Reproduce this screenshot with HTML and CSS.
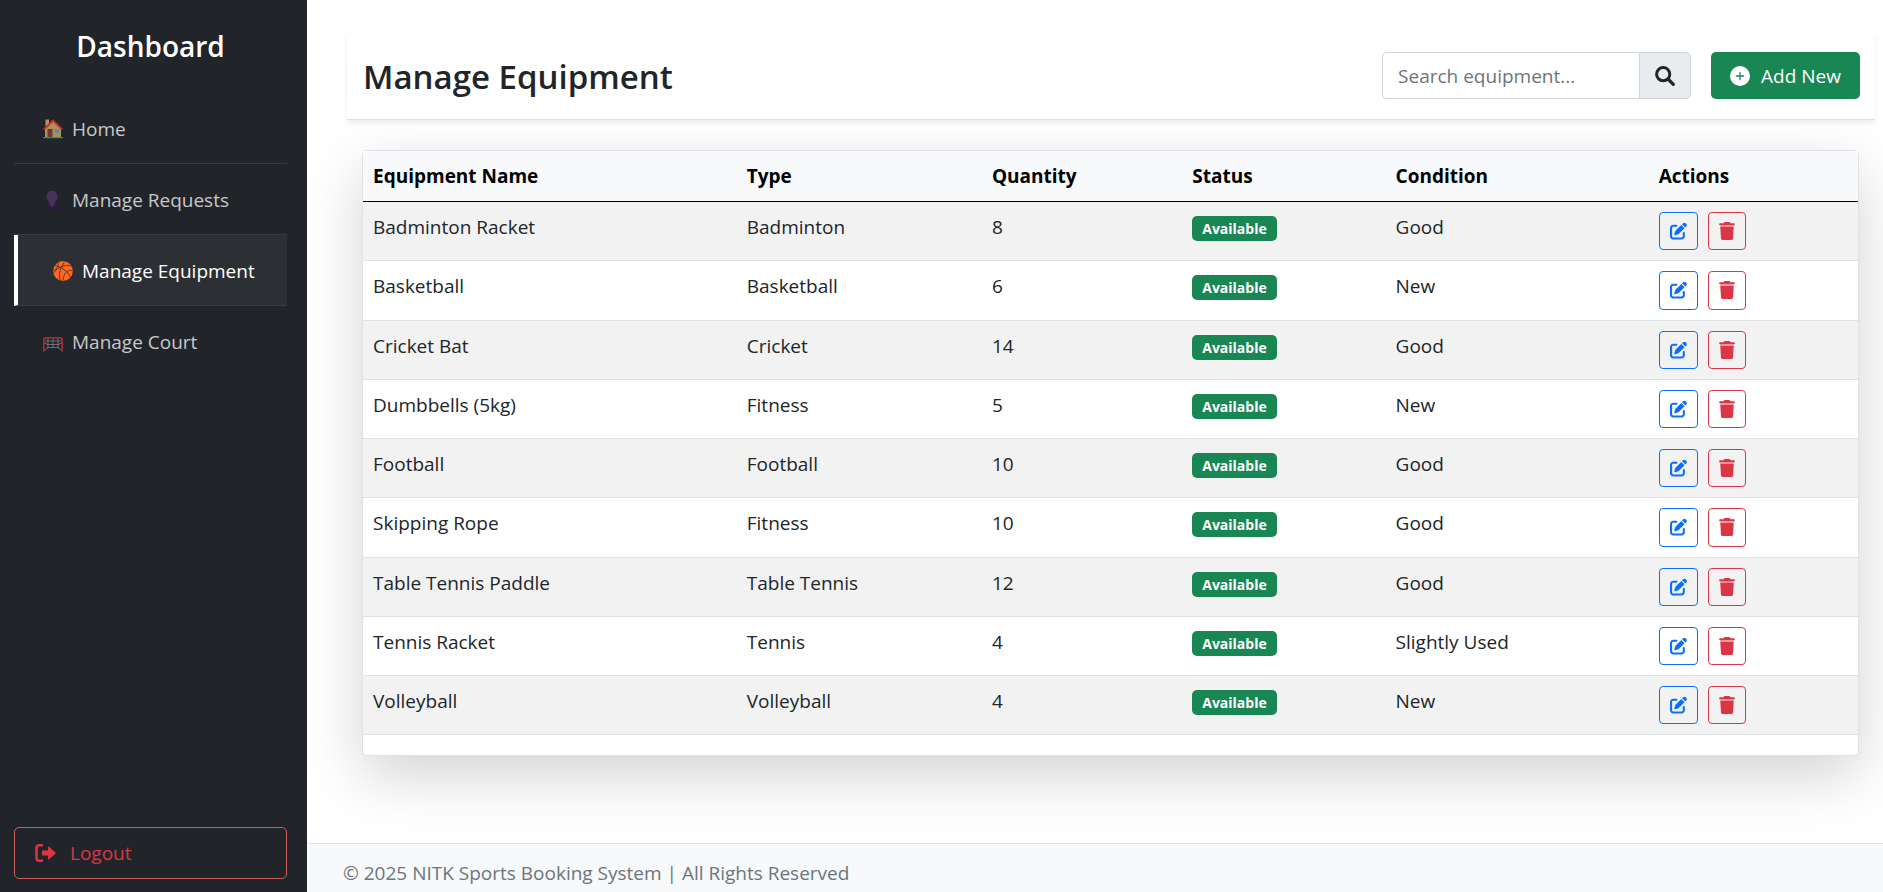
FILE: index.html
```html
<!DOCTYPE html>
<html lang="en">
<head>
<meta charset="utf-8">
<meta name="viewport" content="width=device-width, initial-scale=1">
<title>Manage Equipment</title>
<link rel="stylesheet" href="styles.css">
</head>
<body>
<svg class="sprite" aria-hidden="true">
  <symbol id="i-edit" viewBox="0 0 512 512"><path d="M471.600 21.700c-21.900-21.900-57.300-21.900-79.200 0L362.300 51.700l97.900 97.900 30.100-30.100c21.900-21.900 21.900-57.300 0-79.200L471.600 21.700zm-299.200 220c-6.100 6.100-10.800 13.600-13.500 21.900l-29.600 88.800c-2.900 8.600-.6 18.100 5.800 24.600s15.900 8.700 24.600 5.800l88.800-29.600c8.200-2.700 15.700-7.400 21.900-13.500L437.700 172.300 339.700 74.300 172.400 241.700zM96 64C43 64 0 107 0 160V416c0 53 43 96 96 96H352c53 0 96-43 96-96V320c0-17.700-14.300-32-32-32s-32 14.300-32 32v96c0 17.700-14.300 32-32 32H96c-17.700 0-32-14.300-32-32V160c0-17.700 14.300-32 32-32h96c17.700 0 32-14.300 32-32s-14.300-32-32-32H96z"/></symbol>
  <symbol id="i-trash" viewBox="0 0 448 512"><path d="M135.200 17.700L128 32H32C14.300 32 0 46.300 0 64S14.300 96 32 96H416c17.700 0 32-14.300 32-32s-14.300-32-32-32H320l-7.200-14.300C307.400 6.800 296.300 0 284.200 0H163.800c-12.100 0-23.200 6.800-28.600 17.700zM416 128H32L53.200 467c1.600 25.300 22.600 45 47.900 45H346.900c25.300 0 46.300-19.700 47.900-45L416 128z"/></symbol>
</svg>

<aside class="sidebar">
  <h2 class="brand">Dashboard</h2>
  <nav class="nav">
    <a class="nav-link" href="#">
      <svg class="emoji" viewBox="0 0 20 20" aria-hidden="true"><path fill="#d7b06c" d="M2.500 .5h3.500v7h-3.500z"/><path fill="#d7a95f" d="M10 1.500 2 9.500V18.500H18V9.500z"/><path fill="#7c4535" d="M4.500 10h5v8.500h-5z"/><path fill="#57a9de" d="M12 10h4v4h-4z"/><path d="M.8 10.500 10 1.500l9.200 9" fill="none" stroke="#e83335" stroke-width="1.800" stroke-linejoin="round"/><path fill="#1db978" d="M0 18h20v1.200H0z"/></svg>
      Home</a>
    <a class="nav-link" href="#">
      <svg class="emoji" viewBox="0 0 20 20" aria-hidden="true"><path fill="#321b41" d="M.3 19c.2-3 1.700-4.300 5.200-4.700L9 17.500l3.500-3.200c3.500.4 5 1.700 5.200 4.700z"/><path fill="#533566" d="M9 .8c3.400 0 5.200 2 5.200 5 .9.200.8 2.600-.4 2.900-.4 1.900-1.300 3-2.300 3.800v2.200L9 17.500l-2.500-2.800v-2.200C5.500 11.700 4.600 10.600 4.200 8.700 3 8.400 2.900 6 3.800 5.800c0-3 1.800-5 5.200-5z"/></svg>
      Manage Requests</a>
    <a class="nav-link active" href="#" aria-current="page">
      <svg class="emoji" viewBox="0 0 20 20" aria-hidden="true"><circle cx="10" cy="10" r="9.900" fill="#ff6723"/><path d="M2 4.500C8 6 15 10 17.500 16.500M.5 12C5 5.500 12 3.500 18.500 5M5 2c.5 3-1 6-4.500 7.500M11.500.5C9.500 5 7 8 6.500 12c-.3 3 0 5 .8 7.500M19.500 9.500C15 8.500 11 11 10 19.500" fill="none" stroke="#51331f" stroke-width=".9"/></svg>
      Manage Equipment</a>
    <a class="nav-link" href="#">
      <svg class="emoji" viewBox="0 0 20 20" aria-hidden="true"><path d="M5 6v10M10 6v10M15 6v10M2 9h16M4 12.500h12M4 15.500h12M1.500 18.500 5 15.500M18.500 18.500 15 15.500M1 11l4 1.500M19 11l-4 1.500" fill="none" stroke="#96989b" stroke-width=".8"/><path d="M.8 19.500V8q0-2.200 2.200-2.200h14q2.200 0 2.200 2.200v11.500" fill="none" stroke="#e8383d" stroke-width="1.300"/></svg>
      Manage Court</a>
  </nav>
  <button class="logout" type="button">
    <svg class="icon-logout" viewBox="0 0 21 20" aria-hidden="true"><path d="M8 2.200H4.200Q1.500 2.200 1.500 4.900v10.200q0 2.700 2.700 2.700H8" fill="none" stroke="currentColor" stroke-width="2.500"/><path fill="currentColor" d="M7.800 7.500H13V4.300q0-1.300 1-.5l6.300 5.500q.8.700 0 1.400L14 16.200q-1 .8-1-.5v-3.200H7.800q-.8 0-.8-.8V8.300q0-.8.800-.8z"/></svg>
    Logout
  </button>
</aside>

<div class="page">
  <header class="topbar">
    <h1 class="title">Manage Equipment</h1>
    <form class="tools">
      <div class="search">
        <input class="search-input" type="text" placeholder="Search equipment..." aria-label="Search equipment">
        <button class="search-button" type="button" aria-label="Search"><svg class="icon" viewBox="0 0 20 20" fill="none" stroke="currentColor" aria-hidden="true"><circle cx="8.200" cy="8.200" r="6.600" stroke-width="3"/><path d="m13 13 5.300 5.300" stroke-width="3.200" stroke-linecap="round"/></svg></button>
      </div>
      <button class="add" type="button"><svg class="icon" viewBox="0 0 20 20" aria-hidden="true"><circle cx="10" cy="10" r="10" fill="#fff"/><path d="M10 6.300v7.400M6.300 10h7.400" stroke="#198754" stroke-width="1.300" stroke-linecap="round"/></svg>Add New</button>
    </form>
  </header>

  <main class="card">
    <table class="table">
      <colgroup><col class="c-name"><col class="c-type"><col class="c-qty"><col class="c-status"><col class="c-cond"><col class="c-act"></colgroup>
      <thead>
        <tr><th scope="col">Equipment Name</th><th scope="col">Type</th><th scope="col">Quantity</th><th scope="col">Status</th><th scope="col">Condition</th><th scope="col">Actions</th></tr>
      </thead>
      <tbody id="rows"></tbody>
    </table>
  </main>

  <footer class="footer">© 2025 NITK Sports Booking System | All Rights Reserved</footer>
</div>
<script src="app.js"></script>
</body>
</html>
```
FILE: styles.css
```css
* { box-sizing: border-box; }

body {
  margin: 0;
  display: flex;
  min-height: 100vh;
  background: #fff;
  color: #212529;
  font-family: "Open Sans", "Noto Sans", sans-serif;
  font-size: 19px;
  line-height: 30px;
}

button, input { font: inherit; }
button { cursor: pointer; }
.sprite { display: none; }

.sidebar {
  z-index: 2;
  flex: 0 0 307px;
  display: flex;
  flex-direction: column;
  height: 100vh;
  padding: 28px 20px 13px 14px;
  background: #212529;
  color: #fff;
}

.brand {
  margin: 0 0 29px;
  font-size: 28px;
  line-height: 36px;
  font-weight: 600;
  text-align: center;
}

.nav { display: flex; flex-direction: column; }

.nav-link {
  display: flex;
  align-items: center;
  gap: 9px;
  padding: 21px 29px 19px;
  border-bottom: 1px solid #373b3e;
  color: rgba(255, 255, 255, .75);
  text-decoration: none;
}
.nav-link:last-child { border-bottom: 0; }
.nav-link.active {
  padding-left: 35px;
  border-left: 4px solid #fff;
  background: #2c3034;
  color: #fff;
}

.emoji { flex: none; width: 20px; height: 20px; opacity: .8; }
.active .emoji { opacity: 1; }

.logout {
  display: flex;
  align-items: center;
  gap: 14px;
  margin-top: auto;
  padding: 10px 20px;
  border: 1px solid #cd5c5c;
  border-radius: 5px;
  background: transparent;
  color: #dc3545;
}
.icon-logout { width: 21px; height: 20px; }

.page {
  flex: 1;
  min-width: 0;
  display: flex;
  flex-direction: column;
  min-height: 100vh;
}

.topbar {
  z-index: 1;
  display: flex;
  align-items: center;
  justify-content: space-between;
  margin: 32px 8px 30px 40px;
  padding: 20px 15px 20px 16px;
  border-bottom: 1px solid #dee2e6;
  background: #fff;
  box-shadow: 0 3px 5px rgba(0, 0, 0, .075);
}

.title { margin: 0; padding-top: 2px; font-size: 33px; line-height: 42px; font-weight: 600; }
.tools { display: flex; gap: 20px; }

.search { display: flex; width: 309px; }
.search-input {
  flex: 1;
  min-width: 0;
  height: 47px;
  padding: 0 15px;
  border: 1px solid #ced4da;
  border-right: 0;
  border-radius: 5px 0 0 5px;
  color: #212529;
}
.search-input::placeholder { color: #6c757d; opacity: 1; }
.search-button {
  display: flex;
  align-items: center;
  padding: 0 15px;
  border: 1px solid #ced4da;
  border-radius: 0 5px 5px 0;
  background: #e9ecef;
  color: #212529;
}
.icon { width: 20px; height: 20px; }

.add {
  display: flex;
  align-items: center;
  gap: 11px;
  padding: 0 19px;
  border: 0;
  border-radius: 5px;
  background: #198754;
  color: #fff;
}

.card {
  margin: 0 24px 0 55px;
  padding-bottom: 20px;
  border: 1px solid #dee2e6;
  border-radius: 5px;
  background: #fff;
  box-shadow: 0 20px 60px rgba(0, 0, 0, .175);
}

.table { width: 100%; table-layout: fixed; border-collapse: separate; border-spacing: 0; }
.c-name { width: 25%; }
.c-type { width: 16.4%; }
.c-qty { width: 13.4%; }
.c-status { width: 13.6%; }
.c-cond { width: 17.6%; }
.c-act { width: 14%; }

.table th, .table td { padding: 10px; text-align: left; vertical-align: top; }
.table th { background: #f8f9fa; color: #000; border-bottom: 1px solid #000; font-weight: 700; }
.table td { border-bottom: 1px solid #dee2e6; }
.table tbody tr:nth-child(odd) { background: #f2f2f2; }

.badge {
  display: inline-block;
  padding: 5px 10px;
  border-radius: 5px;
  background: #198754;
  color: #fff;
  font-size: 14px;
  line-height: 15px;
  font-weight: 700;
}

.actions { display: flex; gap: 10px; }
.action {
  display: flex;
  align-items: center;
  padding: 5px 10px;
  border: 1px solid currentColor;
  border-radius: 4px;
  background: transparent;
  font-size: 15px;
  line-height: 1.75;
}
.action::after { content: "\200b"; }
.edit { color: #0d6efd; }
.delete { color: #dc3545; }
.edit svg { width: 17px; height: 18px; fill: currentColor; }
.delete svg { width: 16px; height: 18px; fill: currentColor; }

.footer {
  margin-top: auto;
  padding: 14px 36px 4px;
  border-top: 1px solid #dee2e6;
  background: #f8f9fa;
  color: #6c757d;
}
```
FILE: app.js
```js
const equipment = [
  ["Badminton Racket", "Badminton", 8, "Good"],
  ["Basketball", "Basketball", 6, "New"],
  ["Cricket Bat", "Cricket", 14, "Good"],
  ["Dumbbells (5kg)", "Fitness", 5, "New"],
  ["Football", "Football", 10, "Good"],
  ["Skipping Rope", "Fitness", 10, "Good"],
  ["Table Tennis Paddle", "Table Tennis", 12, "Good"],
  ["Tennis Racket", "Tennis", 4, "Slightly Used"],
  ["Volleyball", "Volleyball", 4, "New"]
];

document.getElementById("rows").innerHTML = equipment.map(([name, type, quantity, condition]) => `
  <tr>
    <td>${name}</td>
    <td>${type}</td>
    <td>${quantity}</td>
    <td><span class="badge">Available</span></td>
    <td>${condition}</td>
    <td><div class="actions">
      <button class="action edit" type="button" aria-label="Edit ${name}"><svg><use href="#i-edit"/></svg></button>
      <button class="action delete" type="button" aria-label="Delete ${name}"><svg><use href="#i-trash"/></svg></button>
    </div></td>
  </tr>`).join("");
```
